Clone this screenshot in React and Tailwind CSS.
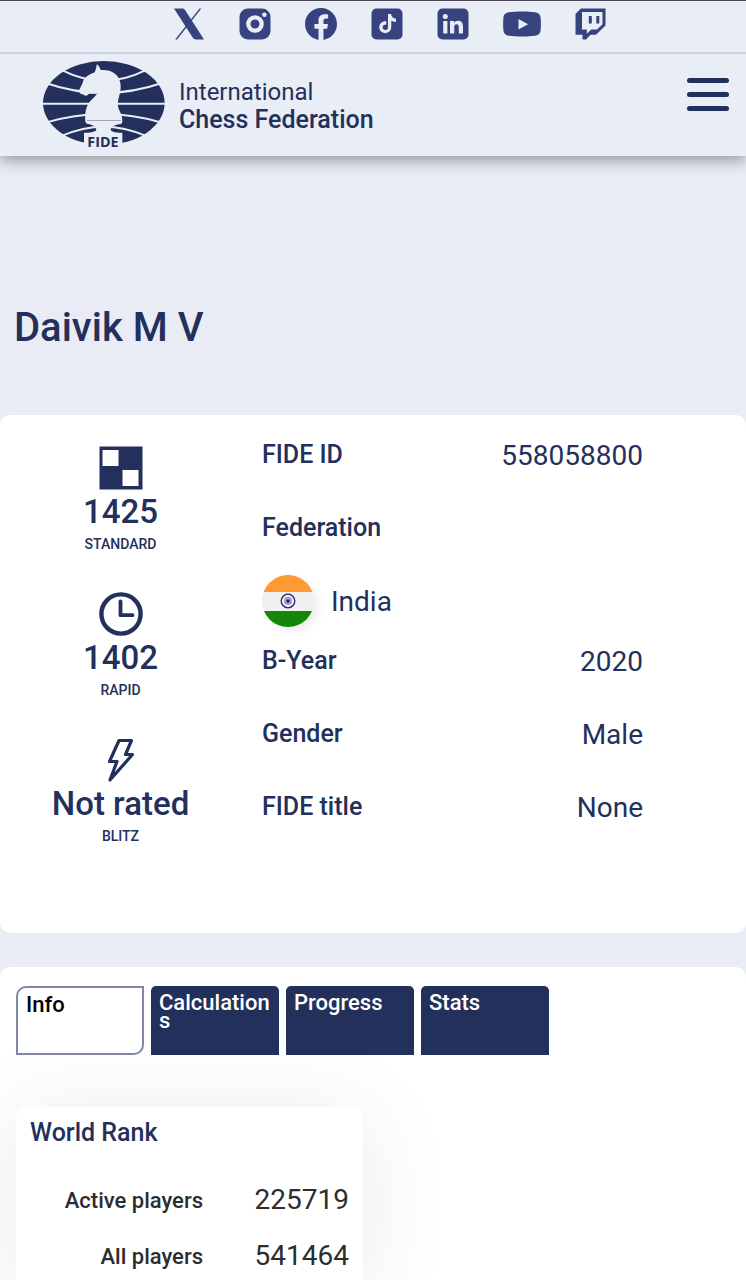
const SOCIAL = [
  {
    name: 'X',
    width: 'w-8',
    box: '0 0 32 32',
    art: (
      <>
        <path d="M1 .5h8.200c1.400 0 2.200.6 3 1.700L31 31.500h-8.200c-1.500 0-2.300-.7-3.100-1.900z" />
        <path d="M26.500.5h1.800L4 31.500H2.200z" />
      </>
    ),
  },
  {
    name: 'Instagram',
    width: 'w-8',
    box: '0 0 32 32',
    art: (
      <path
        fillRule="evenodd"
        d="M9 .5h14A8.500 8.500 0 0 1 31.500 9v14a8.500 8.500 0 0 1-8.500 8.500H9A8.500 8.500 0 0 1 .5 23V9A8.500 8.500 0 0 1 9 .5zM16 7.200a8.800 8.800 0 1 0 0 17.600 8.800 8.800 0 0 0 0-17.600zm0 4.300a4.500 4.500 0 1 1 0 9 4.500 4.500 0 0 1 0-9zM25.400 4.400a2.300 2.300 0 1 0 0 4.600 2.300 2.300 0 0 0 0-4.600z"
      />
    ),
  },
  {
    name: 'Facebook',
    width: 'w-8',
    box: '0 0 24 24',
    art: (
      <path d="M24 12.073c0-6.627-5.373-12-12-12s-12 5.373-12 12c0 5.990 4.388 10.954 10.125 11.854v-8.385H7.078v-3.470h3.047V9.430c0-3.007 1.792-4.669 4.533-4.669 1.312 0 2.686.235 2.686.235v2.953H15.830c-1.491 0-1.956.925-1.956 1.874v2.250h3.328l-.532 3.470h-2.796v8.385C19.612 23.027 24 18.062 24 12.073z" />
    ),
  },
  {
    name: 'TikTok',
    width: 'w-8',
    box: '0 0 32 32',
    art: (
      <>
        <rect x=".5" y=".5" width="31" height="31" rx="5" />
        <path
          fill="#e9edf5"
          transform="translate(7 6) scale(.8)"
          d="M12.525.02c1.310-.02 2.610-.01 3.910-.02.080 1.530.630 3.090 1.750 4.170 1.120 1.110 2.700 1.620 4.240 1.790v4.030c-1.440-.05-2.890-.35-4.200-.97-.57-.26-1.100-.59-1.620-.93-.01 2.920.010 5.840-.02 8.750-.08 1.400-.54 2.790-1.350 3.940-1.310 1.920-3.580 3.170-5.910 3.210-1.430.080-2.860-.31-4.080-1.030-2.020-1.190-3.440-3.370-3.650-5.710-.02-.5-.03-1-.01-1.490.180-1.900 1.120-3.720 2.580-4.960 1.660-1.440 3.980-2.130 6.150-1.720.020 1.480-.04 2.960-.04 4.440-.99-.32-2.150-.23-3.020.370-.63.410-1.110 1.040-1.360 1.750-.21.510-.15 1.070-.14 1.610.240 1.640 1.820 3.020 3.500 2.870 1.120-.01 2.190-.66 2.770-1.610.190-.33.400-.67.410-1.060.100-1.790.060-3.570.070-5.360.010-4.030-.01-8.050.020-12.070z"
        />
      </>
    ),
  },
  {
    name: 'LinkedIn',
    width: 'w-8',
    box: '0 0 32 32',
    art: (
      <>
        <rect x=".5" y=".5" width="31" height="31" rx="5" />
        <g fill="#e9edf5">
          <circle cx="8.300" cy="8.500" r="2.500" />
          <path d="M6.200 13h4.200v12.500H6.200zM13 13h4v1.800c.8-1.300 2.200-2.100 4-2.100 3.800 0 5 2.500 5 6v6.800h-4.200v-6.200c0-1.800-.5-3.100-2.100-3.100-1.800 0-2.500 1.300-2.500 3.100v6.200H13z" />
        </g>
      </>
    ),
  },
  {
    name: 'YouTube',
    width: 'w-[38px]',
    box: '0 0 38 32',
    art: (
      <path
        fillRule="evenodd"
        d="M6 4.300C12 3.300 26 3.300 32 4.300c4 .7 5.300 2.500 5.600 5.700.4 4 .4 8 0 12-.3 3.200-1.600 5-5.600 5.700-6 1-20 1-26 0C2 27 .7 25.200.4 22c-.4-4-.4-8 0-12C.7 6.800 2 5 6 4.300zM15.500 11v10.500l9.500-5.200z"
      />
    ),
  },
  {
    name: 'Twitch',
    width: 'w-8',
    box: '0 0 32 32',
    art: (
      <path
        fillRule="evenodd"
        d="M5.800.5H30.500V17.500L21 26.800H15.500L11 31.500H7.500V26.800H.5V6zM7 4v17.500h4.800v4.300l4.500-4.300H22l5.500-5.300V4zM13.800 8h3v7.500h-3zM21.300 8h3v7.500h-3z"
      />
    ),
  },
];

const RATINGS = [
  { value: '1425', label: 'STANDARD', Icon: BoardIcon },
  { value: '1402', label: 'RAPID', Icon: ClockIcon },
  { value: 'Not rated', label: 'BLITZ', Icon: BoltIcon },
];

const TABS = ['Info', 'Calculations', 'Progress', 'Stats'];

const RANKS = [
  ['Active players', '225719'],
  ['All players', '541464'],
];

function BoardIcon() {
  return (
    <svg viewBox="0 0 44 44" className="size-11" aria-hidden="true">
      <rect x=".5" y=".5" width="43" height="43" fill="currentColor" />
      <path d="M3.500 4h16v16h-16zM23.500 24h16v16h-16z" fill="#fff" />
    </svg>
  );
}

function ClockIcon() {
  return (
    <svg viewBox="0 0 44 44" className="size-11" fill="none" stroke="currentColor" aria-hidden="true">
      <circle cx="22" cy="22" r="19.600" strokeWidth="4.400" />
      <path d="M21.500 9.500V23.200H33.500" strokeWidth="3.800" strokeLinecap="round" strokeLinejoin="round" />
    </svg>
  );
}

function BoltIcon() {
  return (
    <svg viewBox="0 0 44 44" className="size-11" fill="none" stroke="currentColor" aria-hidden="true">
      <path
        d="M20 2.500H32.500L26.500 16.500H33.500L11 42L18 23.500H10.500z"
        strokeWidth="3.200"
        strokeLinecap="round"
        strokeLinejoin="round"
      />
    </svg>
  );
}

function Logo() {
  return (
    <svg viewBox="40 32 366 261" className="h-[87px] w-[122px] shrink-0 overflow-visible" role="img" aria-label="FIDE">
      <ellipse cx="222.500" cy="158" rx="182.500" ry="126" fill="#23305c" />
      <g fill="none" stroke="#e9edf5" strokeWidth="6">
        <path d="M98 60Q222 122 347 60M48 98Q222 158 397 98M40 160H406M48 217Q222 165 397 217M98 256Q222 202 347 256" />
      </g>
      <path
        fill="#e9edf5"
        d="M201 42C207 46 211 52 213 59C248 56 272 75 273 106C274 132 262 145 265 168C268 185 279 190 278 216L274 221C258 222 244 229 243 238C246 246 262 247 278 247V292H163V247C178 247 197 246 200 238C199 228 186 222 171 220L167 214C165 190 169 172 176 160C182 150 195 141 204 128C195 133 184 127 177 131C172 138 165 138 160 132C152 132 147 126 149 118L159 98C160 88 170 75 195 66Q201 54 201 42Z"
      />
      <path d="M172 210H274" stroke="#23305c" strokeWidth="2" opacity=".7" />
      <text x="220" y="290" textAnchor="middle" fontFamily="Open Sans, sans-serif" fontWeight="700" fontSize="43" fill="#23305c">
        FIDE
      </text>
    </svg>
  );
}

function IndiaFlag() {
  return (
    <svg viewBox="0 0 52 52" className="size-[52px] rounded-full shadow-[4px_4px_10px_rgba(0,0,0,0.08)]" aria-hidden="true">
      <rect width="52" height="17" fill="#ff9933" />
      <rect y="17" width="52" height="19" fill="#f0f0f0" />
      <rect y="36" width="52" height="16" fill="#138808" />
      <circle cx="26" cy="26" r="6.800" fill="none" stroke="#23235f" strokeWidth="1.300" />
      <circle cx="26" cy="26" r="4" fill="#9a9ad8" />
      <circle cx="26" cy="26" r="1.600" fill="#15154a" />
    </svg>
  );
}

function Row({ label, value }) {
  return (
    <div className="flex h-[52px] items-center justify-between">
      <dt className="text-[25px] font-medium">{label}</dt>
      <dd className="pt-[2px] text-[28px]">{value}</dd>
    </div>
  );
}

export default function App() {
  return (
    <div className="flex min-h-screen flex-col overflow-hidden bg-[#e9ecf4] font-['Roboto',sans-serif] text-[#23305c]">
      <header className="relative border-t border-[#4a4858] bg-[#e9edf5] shadow-[0_4px_14px_rgba(0,0,0,0.38)]">
        <nav aria-label="Social media" className="flex h-[53px] items-start justify-center gap-[34px] border-b-2 border-[#cdd1dd] pt-[7px] pl-[34px] text-[#37437f]">
          {SOCIAL.map(({ name, width, box, art }) => (
            <a key={name} href="#" aria-label={name}>
              <svg viewBox={box} className={`h-8 ${width}`} fill="currentColor" aria-hidden="true">
                {art}
              </svg>
            </a>
          ))}
        </nav>
        <div className="flex h-[102px] items-start justify-between pt-[7px] pr-[17px] pl-[43px]">
          <a href="#" className="flex items-start gap-[14px]">
            <Logo />
            <span className="pt-[17px] text-2xl leading-7">
              International
              <br />
              <span className="text-[25px] font-medium">Chess Federation</span>
            </span>
          </a>
          <button type="button" aria-label="Menu" className="mt-[17px] flex w-[42px] flex-col gap-[9px]">
            <span className="h-[5px] w-full rounded-sm bg-[#23305c]" />
            <span className="h-[5px] w-full rounded-sm bg-[#23305c]" />
            <span className="h-[5px] w-full rounded-sm bg-[#23305c]" />
          </button>
        </div>
      </header>

      <main className="flex grow flex-col">
        <h1 className="px-[14px] pt-[148px] pb-[63px] text-[40px] leading-[48px] font-medium">Daivik M V</h1>

        <section className="flex h-[518px] rounded-[10px] bg-white pr-[103px]">
          <div className="flex w-[241px] flex-col gap-[38px] pt-[31px]">
            {RATINGS.map(({ value, label, Icon }) => (
              <div key={label} className="flex flex-col items-center">
                <Icon />
                <p className="text-[33px] leading-[44px] font-medium">{value}</p>
                <p className="text-sm leading-5 font-medium">{label}</p>
              </div>
            ))}
          </div>
          <div className="ml-[21px] flex grow flex-col gap-2 pt-[14px]">
            <dl className="flex flex-col gap-[21px]">
              <Row label="FIDE ID" value="558058800" />
              <div className="flex flex-col gap-[21px]">
                <dt className="flex h-[52px] items-center text-[25px] font-medium">Federation</dt>
                <dd className="flex items-center gap-[17px] text-[28px]">
                  <IndiaFlag />
                  <span className="pt-[2px]">India</span>
                </dd>
              </div>
            </dl>
            <dl className="flex flex-col gap-[21px]">
              <Row label="B-Year" value="2020" />
              <Row label="Gender" value="Male" />
              <Row label="FIDE title" value="None" />
            </dl>
          </div>
        </section>

        <section className="mt-[34px] flex grow flex-col rounded-t-[10px] bg-white px-4 pt-[19px]">
          <div role="tablist" className="relative z-10 flex gap-[7px]">
            {TABS.map((tab, i) => (
              <button
                key={tab}
                type="button"
                role="tab"
                aria-selected={i === 0}
                className={
                  i === 0
                    ? 'flex h-[69px] w-32 rounded-tl-[10px] rounded-br-[10px] border-2 border-[#8088a8] bg-white px-2 pt-2 text-left text-[22px] leading-[18px] font-medium text-black'
                    : 'flex h-[69px] w-32 rounded-t-[5px] bg-[#23305c] px-2 pt-2 text-left text-[22px] leading-[18px] font-medium text-white'
                }
              >
                <span className="w-full break-all">{tab}</span>
              </button>
            ))}
          </div>

          <div className="mt-[52px] flex w-[347px] grow flex-col rounded-t-[10px] bg-white px-[14px] pt-3 shadow-[0_10px_90px_rgba(35,48,92,0.1)]">
            <h2 className="text-[25px] leading-7 font-medium">World Rank</h2>
            <table className="mt-[25px] w-full text-right text-[#2d2d2f]">
              <tbody>
                {RANKS.map(([label, value]) => (
                  <tr key={label} className="h-14">
                    <th scope="row" className="w-[173px] text-right text-[22px] font-medium">{label}</th>
                    <td className="text-[28px]">{value}</td>
                  </tr>
                ))}
              </tbody>
            </table>
          </div>
        </section>
      </main>
    </div>
  );
}
